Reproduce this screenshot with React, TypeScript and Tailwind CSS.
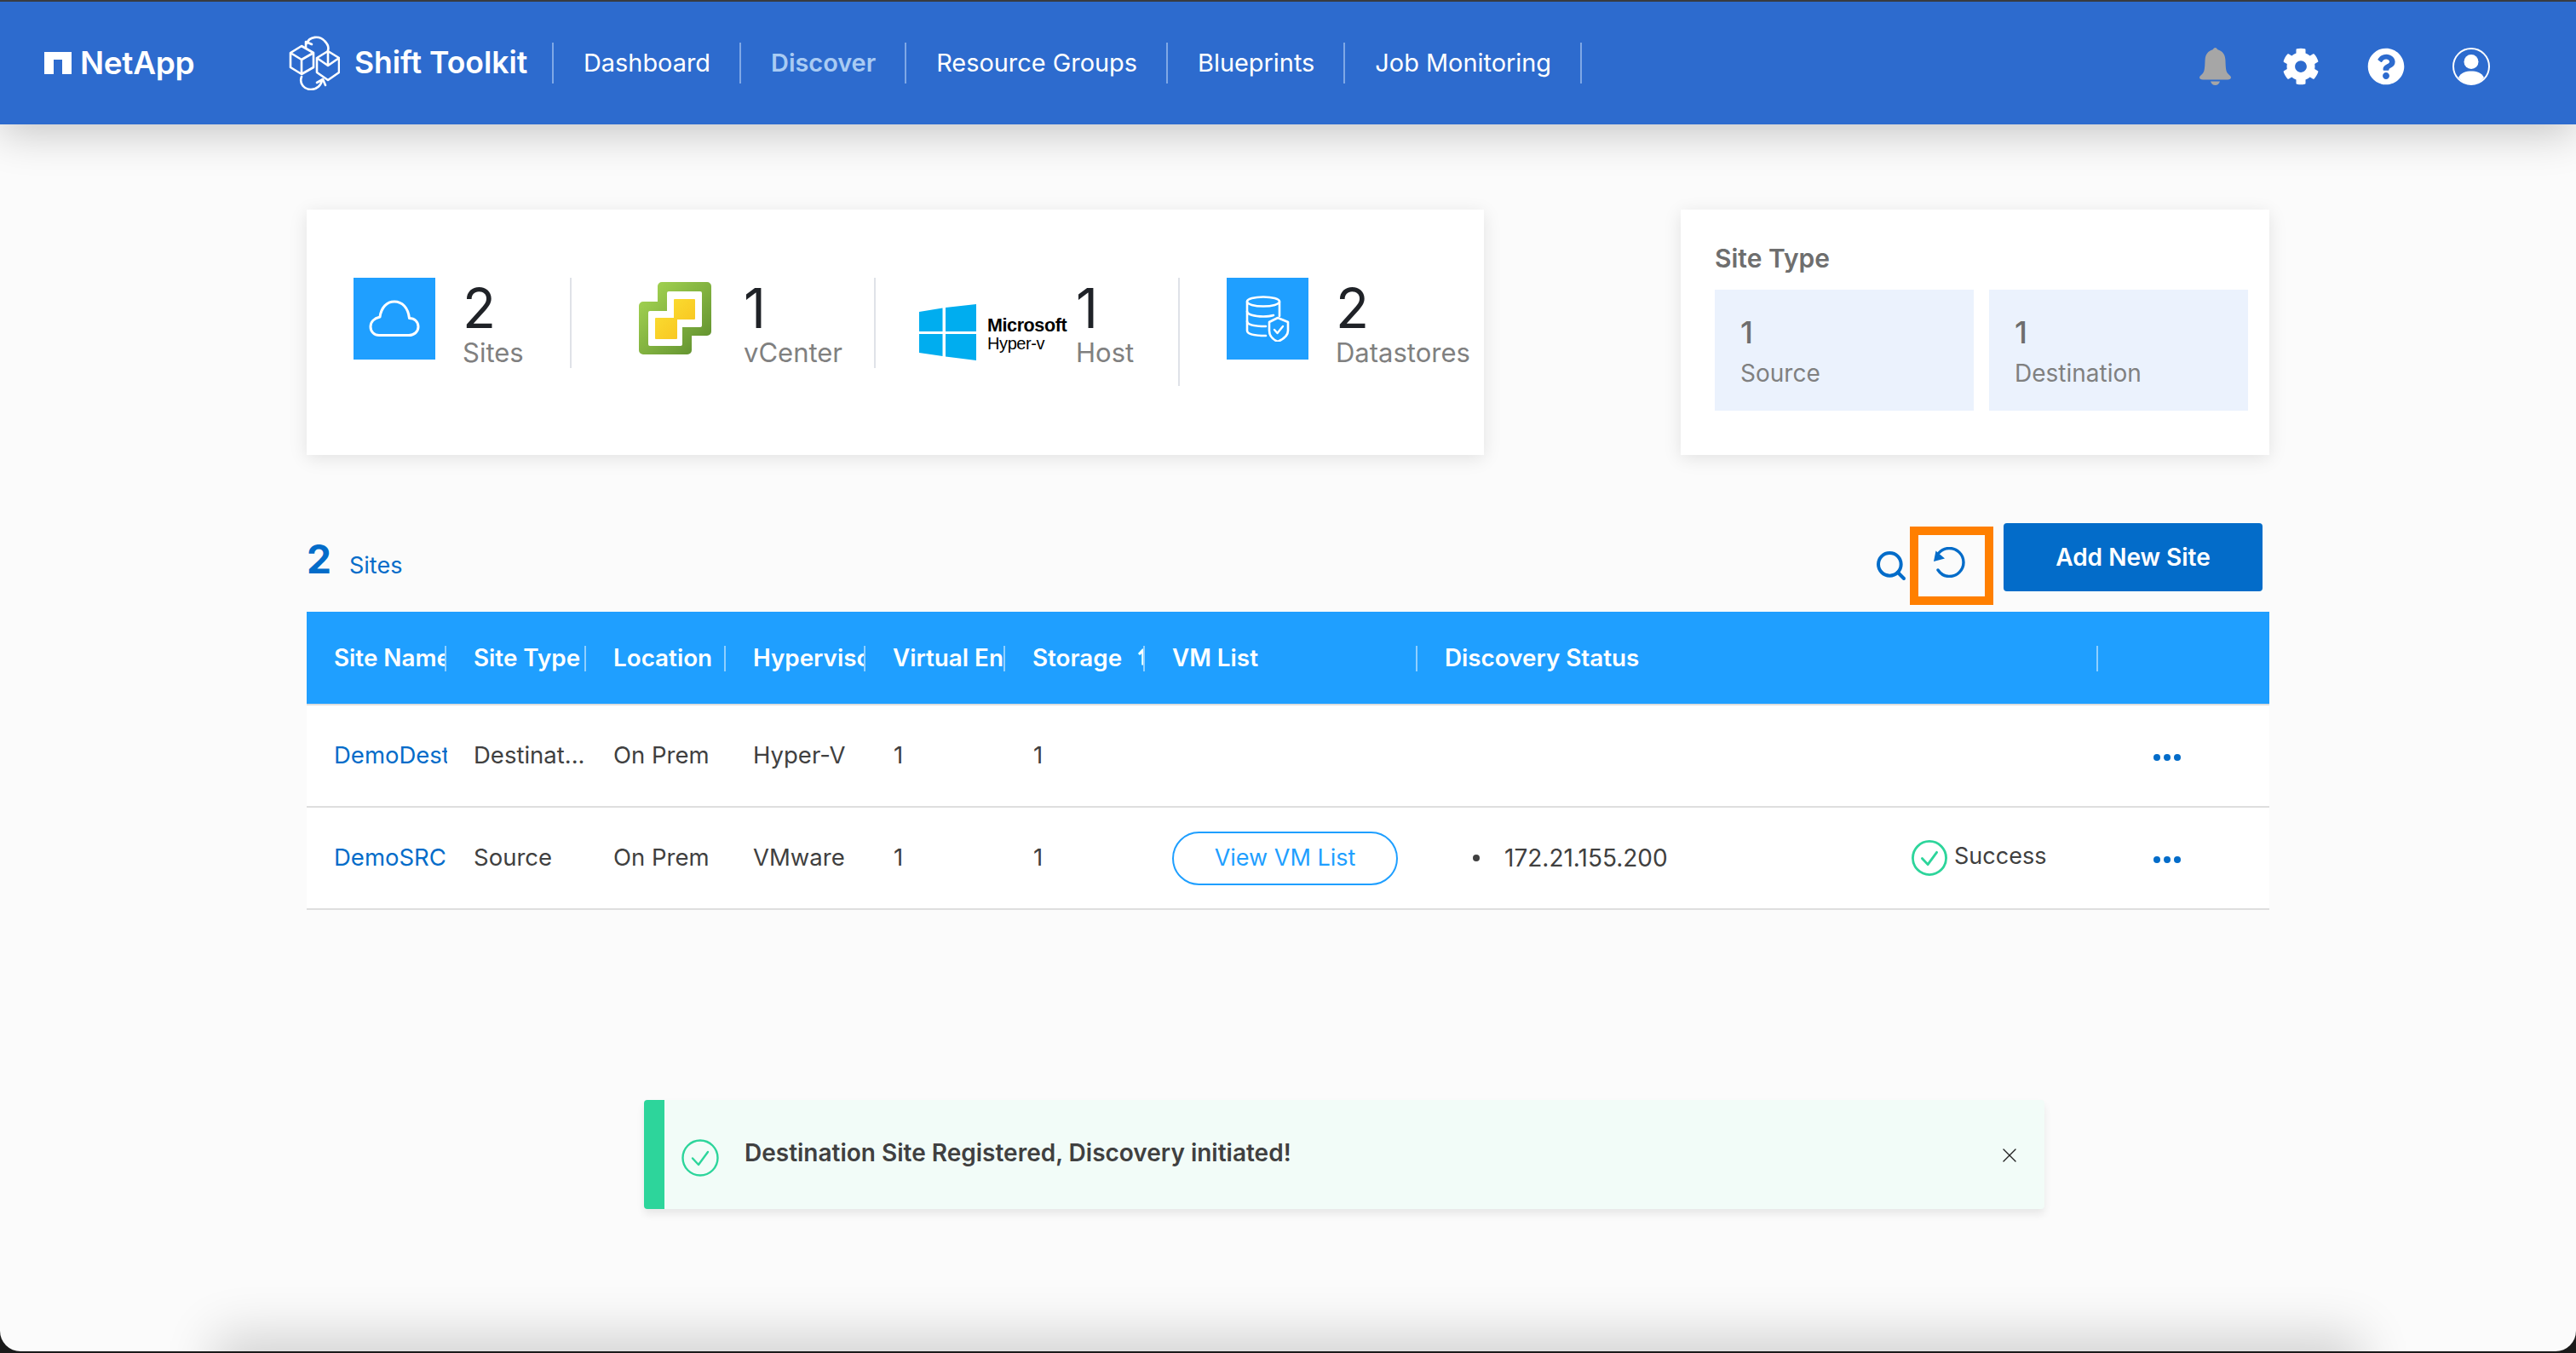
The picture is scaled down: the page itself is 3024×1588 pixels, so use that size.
import React from 'react';
import { Search, X } from 'lucide-react';
import { FaCog, FaQuestionCircle } from 'react-icons/fa';

const navItems = ['Dashboard', 'Discover', 'Resource Groups', 'Blueprints', 'Job Monitoring'];

const columns = [
  { label: 'Site Name', w: 'w-[164px]' },
  { label: 'Site Type', w: 'w-[164px]' },
  { label: 'Location', w: 'w-[164px]' },
  { label: 'Hypervisor', w: 'w-[164px]' },
  { label: 'Virtual Env', w: 'w-[164px]' },
  { label: 'Storage', w: 'w-[164px]' },
];

const rows = [
  { name: 'DemoDest', type: 'Destinat...', location: 'On Prem', hyper: 'Hyper-V', discovered: false },
  { name: 'DemoSRC', type: 'Source', location: 'On Prem', hyper: 'VMware', discovered: true },
];

const NetAppMark = () => (
  <svg viewBox="0 0 32 26" className="w-[32px] h-[26px]" fill="#fff">
    <path d="M0 0H32V26H21V9H11V26H0Z" />
  </svg>
);

const ShiftLogo = () => (
  <svg viewBox="0 0 60 64" className="w-[60px] h-[64px]" fill="none" stroke="#fff" strokeWidth="2.6" strokeLinejoin="round" strokeLinecap="round">
    <path d="M15 12 L29 20 V37 L15 45 L2 37 V20 Z M2 20 L15 28 L29 20 M15 28 V45" />
    <path d="M46 18 L59 26 V43 L46 52 L33 43 V26 Z M33 26 L46 35 L59 26 M46 35 V18" />
    <path d="M21 9 C24 1 36 -1 42 6 C46 10 47 14 46 17" />
    <path d="M20 14 L20 7 L27 10" />
    <path d="M15 48 C12 56 18 63 26 63 C33 63 38 58 39 52" />
    <path d="M33 55 L40 51 L43 58" />
  </svg>
);

const BellIcon = () => (
  <svg viewBox="0 0 37 44" className="w-[37px] h-[44px]" fill="#a6a6a6">
    <path d="M18.5 0 C20 0 20.5 1.5 21.5 2.2 C27 4 30 7.5 30.4 14 C30.8 21 30.6 27 33 30 C35 32.5 37 33 37 35 C37 36.5 35.5 37.3 33 37.4 L4 37.4 C1.5 37.3 0 36.5 0 35 C0 33 2 32.5 4 30 C6.4 27 6.2 21 6.6 14 C7 7.5 10 4 15.5 2.2 C16.5 1.5 17 0 18.5 0 Z" />
    <path d="M13 39.5 H24 C23 42.5 21 44 18.5 44 C16 44 14 42.5 13 39.5 Z" />
  </svg>
);

const UserIcon = () => (
  <svg viewBox="0 0 44 44" className="w-[44px] h-[44px]">
    <circle cx="22" cy="22" r="21" fill="none" stroke="#fff" strokeWidth="2" />
    <circle cx="22" cy="16.5" r="8.5" fill="#fff" />
    <path d="M7 35 C10 29 16 27.5 22 27.5 C28 27.5 34 29 37 35 C33 41 27 43 22 43 C17 43 11 41 7 35 Z" fill="#fff" />
  </svg>
);

const CloudIcon = () => (
  <svg viewBox="0 0 60 44" className="w-[60px] h-[44px]" fill="none" stroke="#fff" strokeWidth="3">
    <path d="M12 41.5 H47 C53 41.5 58 37.5 58 31.5 C58 25.5 53.5 21.5 47.5 21.5 C46 9 39 2 30 2 C21 2 14.5 9 13 20 C6 21.5 2 26 2 31.5 C2 37.5 6.5 41.5 12 41.5 Z" strokeLinejoin="round" />
  </svg>
);

const DatastoreIcon = () => (
  <svg viewBox="0 0 52 54" className="w-[52px] h-[54px]" fill="none" stroke="#fff" strokeWidth="2.6" strokeLinejoin="round" strokeLinecap="round">
    <ellipse cx="21" cy="7" rx="19" ry="5.5" />
    <path d="M2 7 V41 C2 45 10 47 24 47 M40 7 V24" />
    <path d="M2 18.5 C2 22 10 24.5 21 24.5 C27 24.5 30 24 33 23" />
    <path d="M2 30 C2 34 10 36 24 36" />
    <path d="M38 26 L50 31 V41 C50 47 45 51 38 54 C31 51 28 47 28 41 V31 Z" fill="#1f9fff" />
    <path d="M34 40 L37.5 44 L44 36" strokeWidth="2.4" />
  </svg>
);

const VCenterIcon = () => (
  <svg viewBox="0 0 85 85" className="w-[85px] h-[85px]">
    <defs>
      <linearGradient id="vcGreen" x1="0" y1="0" x2="1" y2="1">
        <stop offset="0" stopColor="#a6d653" />
        <stop offset="1" stopColor="#5f8f2e" />
      </linearGradient>
      <linearGradient id="vcYellow" x1="0" y1="0" x2="1" y2="1">
        <stop offset="0" stopColor="#fbe134" />
        <stop offset="1" stopColor="#f8c11d" />
      </linearGradient>
    </defs>
    <path d="M27 5 H80 V58 H57 V80 H5 V28 H27 Z" fill="url(#vcGreen)" stroke="url(#vcGreen)" strokeWidth="10" strokeLinejoin="round" />
    <path d="M35 13 H72 V51 H49 V73 H13 V36 H35 Z" fill="#fff" stroke="#fff" strokeWidth="4" strokeLinejoin="round" />
    <path d="M42 21 H65 V43 H44 V66 H20 V43 H42 Z" fill="url(#vcYellow)" stroke="url(#vcYellow)" strokeWidth="2" strokeLinejoin="round" />
  </svg>
);

const WindowsIcon = () => (
  <svg viewBox="0 0 67 66" className="w-[67px] h-[66px]" fill="#00adef">
    <polygon points="0,9 27.5,4.6 27.5,32 0,32" />
    <polygon points="31,4 67,0 67,32 31,32" />
    <polygon points="0,35 27.5,35 27.5,61 0,57" />
    <polygon points="31,35 67,35 67,66 31,61.5" />
  </svg>
);

const RefreshIcon = () => (
  <svg viewBox="0 0 37 36" className="w-[37px] h-[36px]" fill="none">
    <path d="M6 7 C9 3.5 13.5 1.5 18.5 1.5 C27.5 1.5 35 9 35 18 C35 27 27.5 34.5 18.5 34.5 C12.5 34.5 8 31.5 5 27" stroke="#036cc9" strokeWidth="3.4" strokeLinecap="round" />
    <polygon points="0,17 2.5,4.5 13,13.5" fill="#036cc9" />
  </svg>
);

const CheckCircle = ({ stroke = 3, size }: { stroke?: number; size: string }) => (
  <svg viewBox="0 0 44 44" className={size} fill="none" stroke="#2dd59b">
    <circle cx="22" cy="22" r="20.5" strokeWidth={stroke} />
    <path d="M13 22.5 L20 30 L31 15" strokeWidth={stroke} strokeLinecap="round" strokeLinejoin="round" />
  </svg>
);

const MoreDots = () => (
  <div className="flex gap-[4px] mt-[3px]">
    <span className="w-[8px] h-[8px] rounded-full bg-[#036cc9]" />
    <span className="w-[8px] h-[8px] rounded-full bg-[#036cc9]" />
    <span className="w-[8px] h-[8px] rounded-full bg-[#036cc9]" />
  </div>
);

const Stat = ({ value, label, offset }: { value: string; label: string; offset: string }) => (
  <div className={`${offset} flex flex-col`}>
    <span className="text-[64px] leading-[64px] pt-[4px] text-[#1f2227]">{value}</span>
    <span className="text-[31px] leading-[38px] mt-[1px] text-[#808080]">{label}</span>
  </div>
);

export default function App() {
  return (
    <div className="relative w-[3024px] h-[1588px] overflow-hidden bg-[#1a1a1a]">
      <div className="relative w-[3024px] h-[1586px] overflow-hidden rounded-b-[24px] bg-[#fbfbfb] flex flex-col font-['Inter',sans-serif] text-[28px] text-[#404040]">
        <div className="h-[2px] shrink-0 bg-[#3d4046]" />
        <header className="h-[144px] shrink-0 flex items-center bg-[#2d6bce] shadow-[0_10px_50px_rgba(0,0,0,0.22)] z-10">
          <div className="w-[339px] shrink-0 pl-[52px] flex items-center gap-[10px] text-white">
            <NetAppMark />
            <span className="text-[37px] font-semibold tracking-[-0.3px]">NetApp</span>
          </div>
          <ShiftLogo />
          <span className="ml-[17px] w-[232px] shrink-0 text-[35.5px] font-semibold text-white">Shift Toolkit</span>
          <nav className="flex items-center">
            {navItems.map((item) => (
              <div
                key={item}
                className={`h-[48px] flex items-center pl-[35px] pr-[34px] border-l-2 text-[28.9px] ${item === 'Discover' ? 'border-[#7fa8e6] text-[#a9cbf3] font-semibold' : 'border-[#7fa8e6] text-white'}`}
              >
                {item}
              </div>
            ))}
            <div className="h-[48px] border-l-2 border-[#7fa8e6]" />
          </nav>
          <div className="ml-auto pr-[101px] pt-[8px] flex items-center gap-[56px]">
            <div className="mr-[4px] flex"><BellIcon /></div>
            <FaCog className="w-[44px] h-[44px] text-white" />
            <FaQuestionCircle className="w-[44px] h-[44px] text-white" />
            <UserIcon />
          </div>
        </header>

        <main className="flex-1 px-[360px] pt-[100px]">
          <div className="flex justify-between">
            <section className="w-[1382px] h-[288px] bg-white shadow-[0_4px_20px_rgba(0,0,0,0.1)] pl-[55px] pt-[80px] flex items-start">
              <div className="w-[254px] shrink-0 flex items-start">
                <div className="w-[96px] h-[96px] bg-[#1f9fff] flex items-center justify-center">
                  <CloudIcon />
                </div>
                <Stat value="2" label="Sites" offset="ml-[32px]" />
              </div>
              <div className="w-[2px] h-[106px] bg-[#dfe2e8]" />
              <div className="w-[355px] shrink-0 pl-[79px] flex items-start">
                <div className="pt-[5px]"><VCenterIcon /></div>
                <Stat value="1" label="vCenter" offset="ml-[38px]" />
              </div>
              <div className="w-[2px] h-[106px] bg-[#dfe2e8]" />
              <div className="w-[355px] shrink-0 pl-[51px] flex items-start">
                <div className="pt-[31px]"><WindowsIcon /></div>
                <div className="ml-[13px] w-[104px] pt-[44px] shrink-0 text-black font-['Liberation_Sans',sans-serif]">
                  <div className="text-[21.5px] leading-[24px] font-semibold tracking-[-0.4px]">Microsoft</div>
                  <div className="text-[20px] leading-[18px] tracking-[-0.4px]">Hyper-v</div>
                </div>
                <Stat value="1" label="Host" offset="" />
              </div>
              <div className="w-[2px] h-[127px] bg-[#dfe2e8]" />
              <div className="pl-[55px] flex items-start">
                <div className="w-[96px] h-[96px] bg-[#1f9fff] flex items-center justify-center">
                  <DatastoreIcon />
                </div>
                <Stat value="2" label="Datastores" offset="ml-[32px]" />
              </div>
            </section>

            <section className="w-[691px] h-[288px] bg-white shadow-[0_4px_20px_rgba(0,0,0,0.1)] pl-[40px] pr-[25px] pt-[38px]">
              <h2 className="text-[30px] leading-[38px] font-semibold text-[#6e6e6e]">Site Type</h2>
              <div className="mt-[18px] flex gap-[18px]">
                {['Source', 'Destination'].map((label) => (
                  <div key={label} className="flex-1 h-[142px] bg-[#ebf2fd] pl-[30px] pt-[28px]">
                    <div className="text-[36px] leading-[44px] font-medium text-[#6e6e6e]">1</div>
                    <div className="text-[28px] leading-[36px] mt-[8px] text-[#808080]">{label}</div>
                  </div>
                ))}
              </div>
            </section>
          </div>

          <div className="h-[184px] flex items-start">
            <div className="mt-[98px] flex items-baseline text-[#036cc9]">
              <span className="text-[46px] leading-[48px] font-bold">2</span>
              <span className="ml-[21px] text-[27px]">Sites</span>
            </div>
            <div className="ml-auto flex items-start pr-[8px] pt-[80px]">
              <Search className="mt-[30px] w-[40px] h-[40px] text-[#036cc9]" strokeWidth={2.4} />
              <div className="ml-[2px] mt-[4px] w-[98px] h-[92px] border-[10px] border-[#ff7f00] flex items-center justify-center pb-[8px] pr-[6px]">
                <RefreshIcon />
              </div>
              <button className="ml-[12px] w-[304px] h-[80px] rounded-[4px] bg-[#036cc9] text-white text-[28px] font-semibold">Add New Site</button>
            </div>
          </div>

          <div className="h-[108px] pt-[1px] flex items-center bg-[#1f9fff] text-white font-semibold text-[27.8px]">
            {columns.map((c) => (
              <div key={c.label} className={`${c.w} shrink-0 h-[30px] flex items-center pl-[32px] border-r-2 border-white/50 overflow-hidden whitespace-nowrap relative`}>
                {c.label}
                {c.label === 'Storage' && <span className="absolute right-0 top-[2px] text-[24px] leading-[24px] translate-x-[13px]">⇅</span>}
              </div>
            ))}
            <div className="w-[320px] shrink-0 h-[30px] flex items-center pl-[32px] border-r-2 border-white/50">VM List</div>
            <div className="w-[799px] shrink-0 h-[30px] flex items-center pl-[32px] border-r-2 border-white/50">Discovery Status</div>
          </div>
          <div className="h-[2px] bg-[#dedede]" />
          {rows.map((r) => (
            <div key={r.name} className="h-[120px] bg-white border-b-2 border-[#dedede] flex items-center text-[27.5px]">
              <div className="w-[164px] shrink-0 pl-[32px] whitespace-nowrap text-[#036cc9]">
                <div className="w-[133px] overflow-hidden">{r.name}</div>
              </div>
              <div className="w-[164px] shrink-0 pl-[32px]">{r.type}</div>
              <div className="w-[164px] shrink-0 pl-[32px]">{r.location}</div>
              <div className="w-[164px] shrink-0 pl-[32px]">{r.hyper}</div>
              <div className="w-[164px] shrink-0 pl-[33px]">1</div>
              <div className="w-[164px] shrink-0 pl-[33px]">1</div>
              <div className="w-[320px] shrink-0 pl-[32px]">
                {r.discovered && (
                  <button className="w-[265px] h-[63px] rounded-full border-2 border-[#1f9fff] bg-white text-[#1f9fff] text-[27px]">View VM List</button>
                )}
              </div>
              <div className="w-[799px] shrink-0 flex items-center">
                {r.discovered && (
                  <>
                    <span className="ml-[65px] w-[8px] h-[8px] rounded-full bg-[#404040]" />
                    <span className="ml-[29px] w-[478px] text-[28px]">172.21.155.200</span>
                    <CheckCircle size="w-[42px] h-[42px]" />
                    <span className="ml-[8px] -mt-[4px] text-[27px]">Success</span>
                  </>
                )}
              </div>
              <div className="pl-[65px]"><MoreDots /></div>
            </div>
          ))}
        </main>

        <div className="absolute left-[756px] top-[1291px] w-[1644px] h-[128px] bg-[#f2fcf8] rounded-[4px] border-l-[24px] border-[#2dd59b] shadow-[0_6px_10px_rgba(0,0,0,0.08)] flex items-center">
          <div className="ml-[20px] mt-[8px]"><CheckCircle stroke={2.4} size="w-[44px] h-[44px]" /></div>
          <span className="ml-[30px] -mt-[4px] text-[28px] font-semibold text-[#404040]">Destination Site Registered, Discovery initiated!</span>
          <X className="ml-auto mr-[27px] mt-[2px] w-[28px] h-[28px] text-[#222]" strokeWidth={1.2} />
        </div>

        {/* window shadow bleeding up from under the bottom edge */}
        <div className="absolute left-[280px] right-[280px] top-[1594px] h-[30px] shadow-[0_0_60px_28px_rgba(0,0,0,0.16)]" />
      </div>
    </div>
  );
}
